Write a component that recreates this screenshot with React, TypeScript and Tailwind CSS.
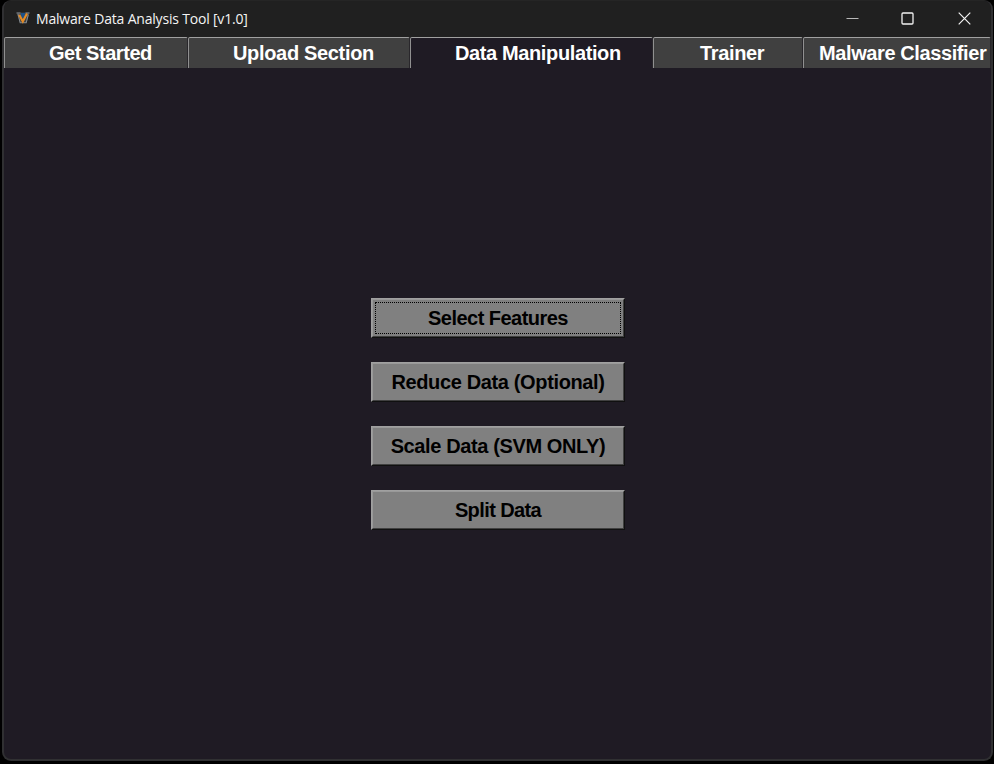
const TABS = [
  { label: "Get Started", box: "w-[184px] pl-[44px] tracking-[-0.45px]", active: false },
  { label: "Upload Section", box: "w-[222px] pl-[44px] tracking-[-0.33px]", active: false },
  { label: "Data Manipulation", box: "w-[243px] pl-[44px] tracking-[-0.38px]", active: true },
  { label: "Trainer", box: "w-[150px] pl-[46px] tracking-[-0.35px]", active: false },
  { label: "Malware Classifier", box: "w-[188px] pl-[15px] tracking-[-0.4px]", active: false },
];

const ACTIONS = [
  { label: "Select Features", text: "tracking-[-0.53px]" },
  { label: "Reduce Data (Optional)", text: "tracking-[-0.36px]" },
  { label: "Scale Data (SVM ONLY)", text: "tracking-[-0.38px]" },
  { label: "Split Data", text: "tracking-[-0.6px]" },
];

function AppIcon() {
  return (
    <svg width="14" height="14" viewBox="0 0 14 14" className="ml-[12px] shrink-0">
      <path d="M0.500 1.500h13L10.500 12H4z" fill="#3b3f44" />
      <path d="M0.500 2h4M9.500 2h4M2 3l2.200 8.800h6L12.300 3.500" stroke="#858a8e" strokeWidth="1.100" fill="none" />
      <path d="M5 2h4v4.500l-2 1.500-2-2z" fill="#1f5288" />
      <path d="M3.200 3.800l3.600 6.700L11 2.500" stroke="#e58b24" strokeWidth="2.200" fill="none" />
      <path d="M5.300 2.500h3.400L7.200 6.500z" fill="#1f5288" />
    </svg>
  );
}

function TitleBar() {
  return (
    <header className="flex h-[37px] shrink-0 items-center bg-[#202020] pb-px">
      <AppIcon />
      <h1 className="ml-[6px] whitespace-nowrap font-['Open_Sans','Noto_Sans',sans-serif] text-[14px] tracking-[-0.19px] text-[#f4f4f4]">
        Malware Data Analysis Tool [v1.0]
      </h1>
      <div className="mr-[20px] ml-auto flex items-center">
        <button aria-label="Minimize" className="mr-[42px]">
          <svg width="13" height="13" viewBox="0 0 13 13" className="block">
            <path d="M0.500 6.500h12" stroke="#b8b8b8" strokeWidth="1" />
          </svg>
        </button>
        <button aria-label="Maximize" className="mr-[44px]">
          <svg width="13" height="13" viewBox="0 0 13 13" className="block">
            <rect x="1" y="1" width="11" height="11" rx="1" fill="none" stroke="#f2f2f2" strokeWidth="1.300" />
          </svg>
        </button>
        <button aria-label="Close">
          <svg width="13" height="13" viewBox="0 0 13 13" className="block">
            <path d="M0.700 0.700l11.600 11.600M12.300 0.700L0.700 12.300" stroke="#f2f2f2" strokeWidth="1.200" />
          </svg>
        </button>
      </div>
    </header>
  );
}

export default function App() {
  return (
    <div className="h-[764px] w-[994px] overflow-hidden bg-black pl-[2px] font-['Liberation_Sans',Arial,sans-serif]">
      <div className="flex h-[761px] w-[991px] flex-col overflow-hidden rounded-[9px] border-x-2 border-t border-b-2 border-[#303032] bg-[#1f1b24] border-t-[#252525]">
        <div className="-mt-px">
          <TitleBar />
        </div>
        <nav className="flex h-[31px] shrink-0 bg-[#202020]">
          {TABS.map((t) => (
            <button
              key={t.label}
              className={`${t.box} ${t.active ? "bg-[#1f1b24]" : "bg-[#404040]"} h-[31px] shrink-0 overflow-hidden rounded-t-[2px] border-t border-r border-l border-t-[#a0a0a0] border-r-[#29272b] border-l-[#909090] text-left text-[20px] leading-[31px] font-bold whitespace-nowrap text-white`}
            >
              {t.label}
            </button>
          ))}
        </nav>
        <main className="flex flex-col items-center gap-[24px] pt-[230px] pl-px">
          {ACTIONS.map((a, i) => (
            <button
              key={a.label}
              className="h-[40px] w-[254px] border border-t-[#a0a0a0] border-r-[#101010] border-b-[#101010] border-l-[#a0a0a0] bg-[#808080] text-[20px] font-bold whitespace-nowrap text-black"
            >
              <span className="block h-full border border-t-[#999999] border-r-[#404040] border-b-[#404040] border-l-[#999999] p-[2px]">
                <span
                  className={`${a.text} flex h-full items-center justify-center border border-dotted ${i === 0 ? "border-black" : "border-transparent"}`}
                >
                  {a.label}
                </span>
              </span>
            </button>
          ))}
        </main>
      </div>
    </div>
  );
}
